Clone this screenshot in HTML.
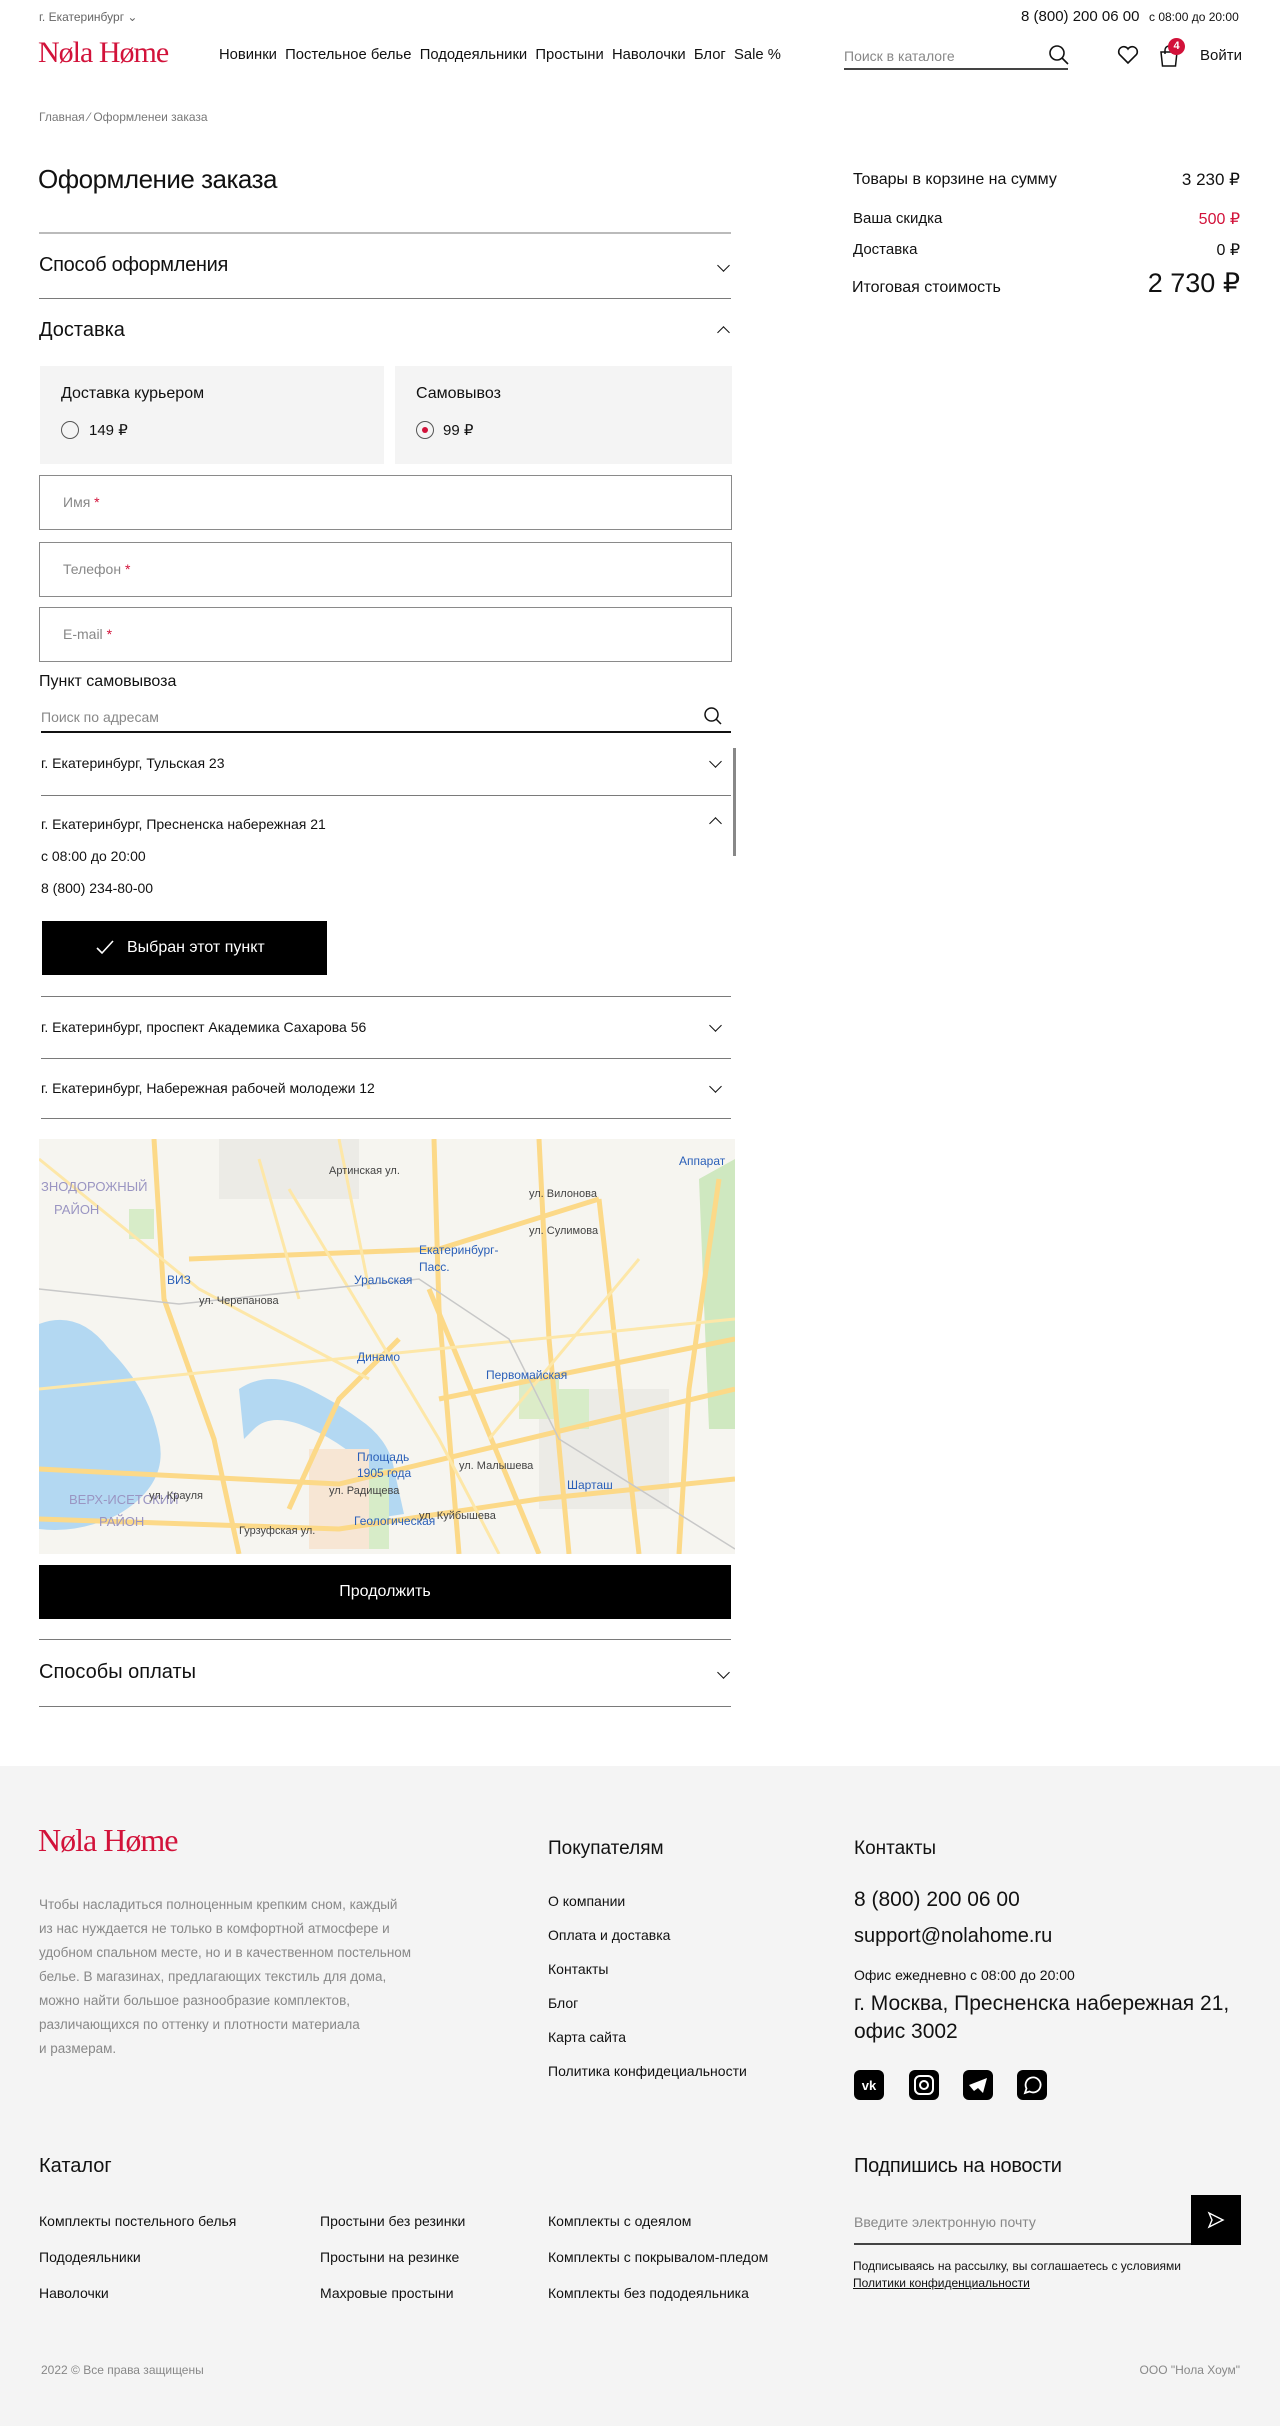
<!DOCTYPE html>
<html><head><meta charset="utf-8">
<style>
*{margin:0;padding:0;box-sizing:border-box}
body{width:1280px;height:2426px;position:relative;font-family:"Liberation Sans","Noto Sans CJK SC",sans-serif;color:#111;background:#fff;overflow:hidden}
.a{position:absolute;white-space:nowrap}
.line{position:absolute;height:1px;background:#7a7a7a}
.red{color:#d2123a}
.logo{font-family:"Liberation Serif",serif;color:#d2123a;font-weight:normal;letter-spacing:-1px}
.chev{position:absolute;width:9px;height:9px;border-right:1.5px solid #111;border-bottom:1.5px solid #111;transform:rotate(45deg)}
.chev.up{transform:rotate(225deg)}
.inp{position:absolute;left:39px;width:693px;border:1.5px solid #8a8a8a;height:55px}
.inp span{position:absolute;left:23px;top:18px;font-size:14px;color:#888}
.inp b{color:#d2123a;font-weight:normal}
.fl{font-size:14px;color:#111}
</style></head><body>

<div class="a" style="left:39px;top:10px;font-size:12px;color:#666">г. Екатеринбург ⌄</div>
<div class="a" style="left:1021px;top:8px;font-size:15px">8 (800) 200 06 00</div>
<div class="a" style="left:1149px;top:10px;font-size:12px">с 08:00 до 20:00</div>

<div class="a logo" style="left:38px;top:36px;font-size:30px">Nøla Høme</div>
<div class="a" style="left:219px;top:47px;font-size:14.8px">Новинки&nbsp; Постельное белье&nbsp; Пододеяльники&nbsp; Простыни&nbsp; Наволочки&nbsp; Блог&nbsp; Sale %</div>
<div class="a" style="left:844px;top:48px;font-size:14px;color:#888">Поиск в каталоге</div>
<div style="position:absolute;left:844px;top:68px;width:224px;height:2px;background:#444"></div>
<svg class="a" style="left:1048px;top:44px" width="22" height="22" viewBox="0 0 22 22"><circle cx="9" cy="9" r="7" fill="none" stroke="#111" stroke-width="1.6"/><path d="M14 14l6 6" stroke="#111" stroke-width="1.6"/></svg>
<svg class="a" style="left:1117px;top:45px" width="22" height="20" viewBox="0 0 22 20"><path d="M11 18 L2.5 9.5 A5 5 0 0 1 11 4 A5 5 0 0 1 19.5 9.5 Z" fill="none" stroke="#111" stroke-width="1.6"/></svg>
<svg class="a" style="left:1158px;top:44px" width="22" height="24" viewBox="0 0 22 24"><path d="M3 8h16l-1.5 14h-13z" fill="none" stroke="#111" stroke-width="1.5"/><path d="M7 10V6a4 4 0 0 1 8 0v4" fill="none" stroke="#111" stroke-width="1.5"/></svg>
<div class="a" style="left:1168px;top:38px;width:17px;height:17px;border-radius:50%;background:#d2123a;color:#fff;font-size:11px;text-align:center;line-height:17px;font-weight:bold">4</div>
<div class="a" style="left:1200px;top:47px;font-size:15px">Войти</div>

<div class="a" style="left:39px;top:110px;font-size:12px;color:#777">Главная ⁄ Оформленеи заказа</div>

<div class="a" style="left:38px;top:164px;font-size:26px;letter-spacing:-0.5px">Оформление заказа</div>

<div class="a" style="left:853px;top:171px;font-size:16px">Товары в корзине на сумму</div>
<div class="a" style="right:40px;top:170px;font-size:17px">3 230 ₽</div>
<div class="a" style="left:853px;top:210px;font-size:15px">Ваша скидка</div>
<div class="a red" style="right:40px;top:209px;font-size:16px">500 ₽</div>
<div class="a" style="left:853px;top:241px;font-size:15px">Доставка</div>
<div class="a" style="right:40px;top:240px;font-size:16px">0 ₽</div>
<div class="a" style="left:852px;top:279px;font-size:16px">Итоговая стоимость</div>
<div class="a" style="right:40px;top:268px;font-size:27px">2 730 ₽</div>

<div class="line" style="left:39px;top:232px;width:692px;height:2px;background:#bbb"></div>
<div class="a" style="left:39px;top:254px;font-size:20px;letter-spacing:-0.3px">Способ оформления</div>
<div class="chev" style="left:719px;top:261px"></div>
<div class="line" style="left:39px;top:298px;width:692px"></div>
<div class="a" style="left:39px;top:319px;font-size:20px">Доставка</div>
<div class="chev up" style="left:719px;top:328px"></div>

<div class="a" style="left:40px;top:366px;width:344px;height:98px;background:#f4f4f4"></div>
<div class="a" style="left:395px;top:366px;width:337px;height:98px;background:#f4f4f4"></div>
<div class="a" style="left:61px;top:385px;font-size:16px">Доставка курьером</div>
<div class="a" style="left:61px;top:421px;width:18px;height:18px;border:1px solid #555;border-radius:50%"></div>
<div class="a" style="left:89px;top:421px;font-size:15px">149 ₽</div>
<div class="a" style="left:416px;top:385px;font-size:16px">Самовывоз</div>
<div class="a" style="left:416px;top:421px;width:18px;height:18px;border:1px solid #555;border-radius:50%"><div style="position:absolute;left:5px;top:5px;width:6px;height:6px;border-radius:50%;background:#d2123a"></div></div>
<div class="a" style="left:443px;top:421px;font-size:15px">99 ₽</div>

<div class="inp" style="top:475px"><span>Имя <b>*</b></span></div>
<div class="inp" style="top:542px"><span>Телефон <b>*</b></span></div>
<div class="inp" style="top:607px"><span>E-mail <b>*</b></span></div>

<div class="a" style="left:39px;top:673px;font-size:16px">Пункт самовывоза</div>
<div class="a" style="left:41px;top:709px;font-size:14px;color:#888">Поиск по адресам</div>
<svg class="a" style="left:703px;top:706px" width="20" height="20" viewBox="0 0 20 20"><circle cx="8.5" cy="8.5" r="6.5" fill="none" stroke="#111" stroke-width="1.5"/><path d="M13 13l5 5" stroke="#111" stroke-width="1.5"/></svg>
<div class="a" style="left:41px;top:731px;width:690px;height:2px;background:#111"></div>

<div class="a" style="left:733px;top:748px;width:3px;height:108px;background:#888"></div>
<div class="a" style="left:41px;top:755px;font-size:14px">г. Екатеринбург, Тульская 23</div>
<div class="chev" style="left:711px;top:757px"></div>
<div class="line" style="left:41px;top:795px;width:690px"></div>
<div class="a" style="left:41px;top:816px;font-size:14px">г. Екатеринбург, Пресненска набережная 21</div>
<div class="chev up" style="left:711px;top:819px"></div>
<div class="a" style="left:41px;top:848px;font-size:14px">с 08:00 до 20:00</div>
<div class="a" style="left:41px;top:880px;font-size:14px">8 (800) 234-80-00</div>
<div class="a" style="left:42px;top:921px;width:285px;height:54px;background:#000;color:#fff;font-size:16px;line-height:54px;padding-left:85px">Выбран этот пункт</div>
<svg class="a" style="left:96px;top:940px" width="18" height="15" viewBox="0 0 18 15"><path d="M1 8l5 5L17 1" fill="none" stroke="#fff" stroke-width="1.6"/></svg>
<div class="line" style="left:41px;top:996px;width:690px"></div>
<div class="a" style="left:41px;top:1019px;font-size:14px">г. Екатеринбург, проспект Академика Сахарова 56</div>
<div class="chev" style="left:711px;top:1021px"></div>
<div class="line" style="left:41px;top:1058px;width:690px"></div>
<div class="a" style="left:41px;top:1080px;font-size:14px">г. Екатеринбург, Набережная рабочей молодежи 12</div>
<div class="chev" style="left:711px;top:1082px"></div>
<div class="line" style="left:41px;top:1118px;width:690px"></div>

<svg class="a" style="left:39px;top:1139px" width="696" height="415" viewBox="0 0 696 415">
<rect width="696" height="415" fill="#f6f5f0"/>
<rect x="180" y="0" width="140" height="60" fill="#ecebe6"/>
<rect x="500" y="250" width="130" height="120" fill="#ecebe6"/>
<path d="M0 185 Q40 170 70 210 Q110 250 120 300 Q130 345 80 375 Q40 395 0 390Z" fill="#b3d8f2"/>
<path d="M200 250 Q230 230 270 250 Q300 265 320 280 Q350 300 355 330 L365 375 L345 378 L330 330 Q300 300 260 285 Q230 275 215 290 L205 300Z" fill="#b3d8f2"/>
<path d="M660 40 L696 20 L696 290 L670 290Z" fill="#cfe8c0"/>
<rect x="90" y="70" width="25" height="30" fill="#d7ecc8"/>
<rect x="520" y="250" width="30" height="40" fill="#d7ecc8"/>
<rect x="330" y="330" width="20" height="80" fill="#d7ecc8"/>
<rect x="480" y="240" width="40" height="40" fill="#dcecc8"/>
<rect x="270" y="310" width="60" height="100" fill="#f7e6d4"/>
<g stroke="#fcd988" fill="none" stroke-width="5">
<path d="M115 0 L125 160 L175 300 L200 415"/>
<path d="M0 330 L300 345 L696 250"/>
<path d="M395 0 L400 170 L420 415"/>
<path d="M360 200 L300 260 L250 370"/>
<path d="M150 120 L400 110 L560 60"/>
<path d="M390 150 L500 415"/>
<path d="M680 40 L650 250 L640 415"/>
<path d="M0 380 L300 390 L500 360 L696 340"/>
<path d="M500 0 L510 200 L530 415"/>
<path d="M560 60 L600 415"/>
<path d="M400 260 L696 200"/>
</g>
<g stroke="#fde7a8" fill="none" stroke-width="3">
<path d="M0 20 L160 150 L330 240"/>
<path d="M250 50 L400 300 L460 415"/>
<path d="M600 120 L450 300"/>
<path d="M300 0 L330 150"/>
<path d="M0 250 L696 180"/>
<path d="M220 20 L260 160"/>
</g>
<g stroke="#c8c8c8" fill="none" stroke-width="1.5"><path d="M0 150 L140 165 L380 140 L470 200 L520 300 L696 410"/></g>
<g font-family="Liberation Sans,sans-serif" font-size="11" fill="#444">
<text x="2" y="52" fill="#9a95c2" font-size="13">ЗНОДОРОЖНЫЙ</text><text x="15" y="75" fill="#9a95c2" font-size="13">РАЙОН</text>
<text x="30" y="365" fill="#9a95c2" font-size="13">ВЕРХ-ИСЕТСКИЙ</text><text x="60" y="387" fill="#9a95c2" font-size="13">РАЙОН</text>
<text x="290" y="35">Артинская ул.</text><text x="490" y="58">ул. Вилонова</text><text x="490" y="95">ул. Сулимова</text>
<text x="160" y="165">ул. Черепанова</text><text x="420" y="330">ул. Малышева</text><text x="380" y="380">ул. Куйбышева</text>
<text x="200" y="395">Гурзуфская ул.</text><text x="110" y="360">ул. Крауля</text><text x="290" y="355">ул. Радищева</text>
</g>
<g font-family="Liberation Sans,sans-serif" font-size="12" fill="#2a5fb8">
<text x="380" y="115">Екатеринбург-</text><text x="380" y="132">Пасс.</text><text x="315" y="145">Уральская</text>
<text x="128" y="145">ВИЗ</text><text x="318" y="222">Динамо</text><text x="447" y="240">Первомайская</text>
<text x="318" y="322">Площадь</text><text x="318" y="338">1905 года</text><text x="528" y="350">Шарташ</text><text x="315" y="386">Геологическая</text><text x="640" y="26">Аппарат</text>
</g>
</svg>

<div class="a" style="left:39px;top:1565px;width:692px;height:54px;background:#000;color:#fff;font-size:16px;line-height:54px;text-align:center">Продолжить</div>
<div class="line" style="left:39px;top:1639px;width:692px"></div>
<div class="a" style="left:39px;top:1661px;font-size:20px">Способы оплаты</div>
<div class="chev" style="left:719px;top:1668px"></div>
<div class="line" style="left:39px;top:1706px;width:692px"></div>

<div class="a" style="left:0;top:1766px;width:1280px;height:660px;background:#f4f4f4"></div>
<div class="a logo" style="left:38px;top:1822px;font-size:32px">Nøla Høme</div>
<div class="a" style="left:39px;top:1893px;font-size:13.5px;line-height:24px;color:#888">Чтобы насладиться полноценным крепким сном, каждый<br>из нас нуждается не только в комфортной атмосфере и<br>удобном спальном месте, но и в качественном постельном<br>белье. В магазинах, предлагающих текстиль для дома,<br>можно найти большое разнообразие комплектов,<br>различающихся по оттенку и плотности материала<br>и размерам.</div>

<div class="a" style="left:548px;top:1838px;font-size:19px">Покупателям</div>
<div class="a fl" style="left:548px;top:1893px">О компании</div>
<div class="a fl" style="left:548px;top:1927px">Оплата и доставка</div>
<div class="a fl" style="left:548px;top:1961px">Контакты</div>
<div class="a fl" style="left:548px;top:1995px">Блог</div>
<div class="a fl" style="left:548px;top:2029px">Карта сайта</div>
<div class="a fl" style="left:548px;top:2063px">Политика конфидециальности</div>

<div class="a" style="left:854px;top:1838px;font-size:19px">Контакты</div>
<div class="a" style="left:854px;top:1888px;font-size:21px">8 (800) 200 06 00</div>
<div class="a" style="left:854px;top:1925px;font-size:20px">support@nolahome.ru</div>
<div class="a" style="left:854px;top:1967px;font-size:14px">Офис ежедневно с 08:00 до 20:00</div>
<div class="a" style="left:854px;top:1990px;font-size:21px;line-height:28px;white-space:normal;width:390px">г. Москва, Пресненска набережная 21, офис 3002</div>
<svg class="a" style="left:854px;top:2070px" width="195" height="30" viewBox="0 0 195 30">
<rect x="0" y="0" width="30" height="30" rx="6" fill="#000"/><text x="15" y="20" fill="#fff" font-size="13" font-weight="bold" text-anchor="middle" font-family="Liberation Sans">vk</text>
<rect x="55" y="0" width="30" height="30" rx="6" fill="#000"/><rect x="61" y="6" width="18" height="18" rx="5" fill="none" stroke="#fff" stroke-width="2"/><circle cx="70" cy="15" r="4" fill="none" stroke="#fff" stroke-width="2"/>
<rect x="109" y="0" width="30" height="30" rx="6" fill="#000"/><path d="M115 15 L133 8 L129 23 L124 18 L120 21 Z" fill="#fff"/>
<rect x="163" y="0" width="30" height="30" rx="6" fill="#000"/><path d="M171 23 L172.5 18.5 A7.5 7.5 0 1 1 175.5 21.5 Z" fill="none" stroke="#fff" stroke-width="1.8"/>
</svg>

<div class="a" style="left:39px;top:2155px;font-size:20px">Каталог</div>
<div class="a fl" style="left:39px;top:2213px">Комплекты постельного белья</div>
<div class="a fl" style="left:39px;top:2249px">Пододеяльники</div>
<div class="a fl" style="left:39px;top:2285px">Наволочки</div>
<div class="a fl" style="left:320px;top:2213px">Простыни без резинки</div>
<div class="a fl" style="left:320px;top:2249px">Простыни на резинке</div>
<div class="a fl" style="left:320px;top:2285px">Махровые простыни</div>
<div class="a fl" style="left:548px;top:2213px">Комплекты с одеялом</div>
<div class="a fl" style="left:548px;top:2249px">Комплекты с покрывалом-пледом</div>
<div class="a fl" style="left:548px;top:2285px">Комплекты без пододеяльника</div>

<div class="a" style="left:854px;top:2155px;font-size:20px;letter-spacing:-0.3px">Подпишись на новости</div>
<div class="a" style="left:854px;top:2214px;font-size:14px;color:#888">Введите электронную почту</div>
<div class="a" style="left:854px;top:2243px;width:340px;height:2px;background:#444"></div>
<div class="a" style="left:1191px;top:2195px;width:50px;height:50px;background:#000"></div>
<svg class="a" style="left:1207px;top:2211px" width="18" height="18" viewBox="0 0 18 18"><path d="M2 2 L16 9 L2 16 L5 9 Z" fill="none" stroke="#fff" stroke-width="1.4"/></svg>
<div class="a" style="left:853px;top:2259px;font-size:12px">Подписываясь на рассылку, вы соглашаетесь с условиями</div>
<div class="a" style="left:853px;top:2276px;font-size:12px;text-decoration:underline">Политики конфиденциальности</div>

<div class="a" style="left:41px;top:2363px;font-size:12px;color:#888">2022 © Все права защищены</div>
<div class="a" style="right:40px;top:2363px;font-size:12px;color:#888">ООО "Нола Хоум"</div>
</body></html>
